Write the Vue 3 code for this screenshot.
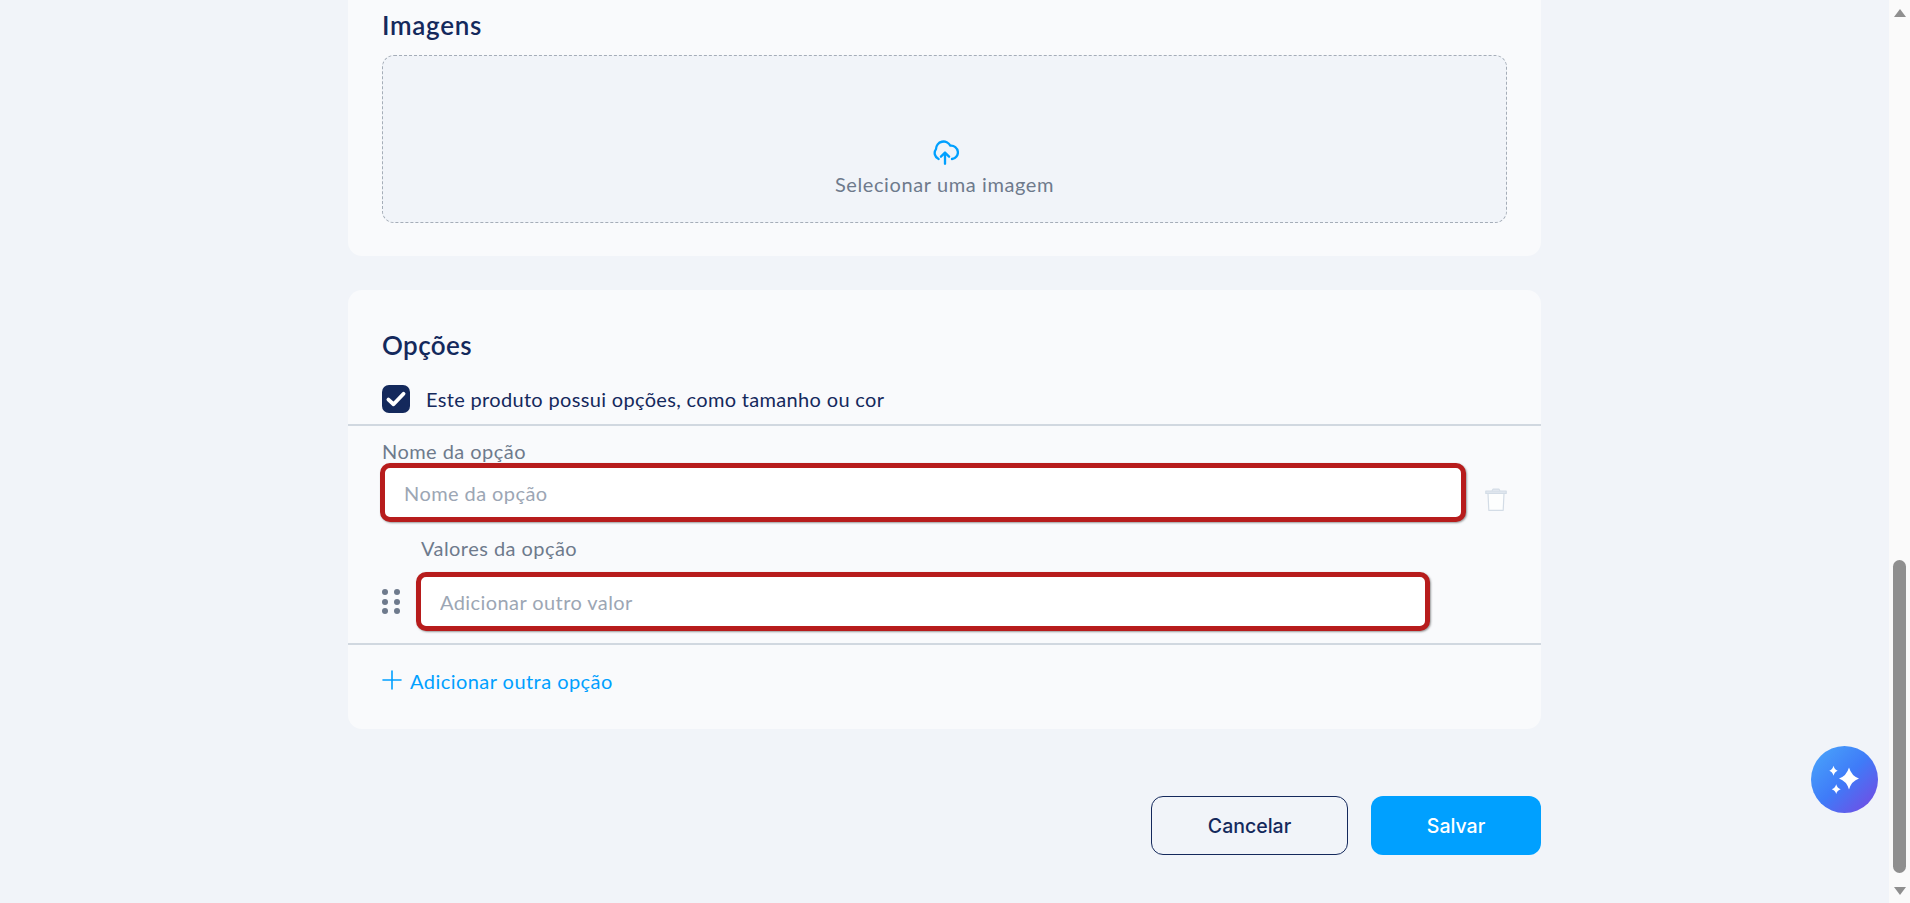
<script setup>
const dots = [1, 2, 3, 4, 5, 6]
</script>

<template>
  <div class="page">
    <main class="content">
      <section class="card card-images">
        <h2 class="title">Imagens</h2>
        <div class="dropzone">
          <svg class="upload" viewBox="0 0 24 24" fill="none" stroke="#00a0ff" stroke-width="2" stroke-linecap="round" stroke-linejoin="round">
            <path d="M6.500 18A5.600 5.600 0 0 1 4.300 9.500 6.500 6.500 0 0 1 16.600 6.600 5.200 5.200 0 0 1 18 18" />
            <path d="M12 22v-9.500M8.500 16l3.500-3.500 3.500 3.500" />
          </svg>
          <span class="drop-text">Selecionar uma imagem</span>
        </div>
      </section>

      <section class="card card-options">
        <h2 class="title">Opções</h2>
        <label class="check-row">
          <span class="checkbox">
            <svg viewBox="0 0 16 16" fill="none" stroke="#fff" stroke-width="2.8" stroke-linecap="round" stroke-linejoin="round">
              <path d="M2.500 8.400l3.700 3.400 7.300-7.600" />
            </svg>
          </span>
          <span class="check-text">Este produto possui opções, como tamanho ou cor</span>
        </label>

        <div class="option-block">
          <div class="option-name">
            <div class="field">
              <span class="label">Nome da opção</span>
              <input class="input" type="text" placeholder="Nome da opção" />
            </div>
            <svg class="trash" viewBox="0 0 22 23" fill="none" stroke="#d3dce6" stroke-width="1.2" stroke-linejoin="round">
              <path d="M3 5.500l.8 16.800h14.400l.8-16.800" fill="#fdfefe" />
              <path d="M.8 3h20.400v2.500H.8z" fill="#dfe6ee" />
              <path d="M7 2.800 8 1.200h6l1 1.600" fill="#dfe6ee" />
            </svg>
          </div>
          <span class="label label-values">Valores da opção</span>
          <div class="value-row">
            <div class="grip">
              <i v-for="d in dots" :key="d"></i>
            </div>
            <input class="input" type="text" placeholder="Adicionar outro valor" />
          </div>
        </div>

        <a class="add-link">
          <svg viewBox="0 0 20 20" fill="none" stroke="#00a0ff" stroke-width="1.6" stroke-linecap="round">
            <path d="M10 1v18M1 10h18" />
          </svg>
          <span>Adicionar outra opção</span>
        </a>
      </section>

      <div class="actions">
        <button class="btn btn-cancel">Cancelar</button>
        <button class="btn btn-save">Salvar</button>
      </div>
    </main>

    <aside class="scrollbar">
      <span class="arrow arrow-up"></span>
      <div class="track"><div class="thumb"></div></div>
      <span class="arrow arrow-down"></span>
    </aside>

    <button class="fab">
      <svg viewBox="0 0 67 67" fill="#fff">
        <path d="M38 21.500Q40.500 30 48 32.500 40.500 35 38 43.500 35.500 35 28 32.500 35.500 30 38 21.500z" />
        <path d="M22.500 19.700Q23.500 23.600 26.700 24.700 23.500 25.800 22.500 29.700 21.500 25.800 18.300 24.700 21.500 23.600 22.500 19.700z" />
        <path d="M25.200 38.300Q26.200 42.100 29.700 43.200 26.200 44.300 25.200 48 24.200 44.300 20.700 43.200 24.200 42.100 25.200 38.300z" />
      </svg>
    </button>
  </div>
</template>

<style>
html, body {
  margin: 0;
  height: 100%;
  overflow: hidden;
  background: #f1f4f9;
}
</style>

<style scoped>
.page {
  display: flex;
  height: 903px;
  overflow: hidden;
  font-family: "Lato", "Liberation Sans", sans-serif;
  color: #14295c;
}

.content {
  flex: 1;
  display: flex;
  flex-direction: column;
  align-items: center;
}

.card {
  width: 1193px;
  box-sizing: border-box;
  background: #f9fafc;
  border-radius: 14px;
}

.card-images {
  height: 256px;
  padding: 10px 34px 0;
  border-radius: 0 0 14px 14px;
  margin-bottom: 34px;
}

.card-options {
  height: 439px;
  padding-top: 40px;
}

.title {
  margin: 0;
  font-size: 26px;
  line-height: 30px;
  font-weight: 600;
  letter-spacing: 0.7px;
  color: #14295c;
}

.card-options .title {
  margin-left: 34px;
  letter-spacing: 0.4px;
}

.dropzone {
  height: 168px;
  margin-top: 15px;
  box-sizing: border-box;
  border: 1px dashed #a5adb8;
  border-radius: 12px;
  background: #f1f4f9;
  display: flex;
  flex-direction: column;
  align-items: center;
  padding-top: 82px;
}

.upload {
  width: 28px;
  height: 28px;
}

.drop-text {
  margin-top: 6px;
  font-size: 20px;
  line-height: 24px;
  letter-spacing: 0.6px;
  color: #6e7a8c;
}

.check-row {
  display: flex;
  align-items: center;
  gap: 16px;
  margin: 25px 0 0 34px;
}

.checkbox {
  width: 28px;
  height: 28px;
  border-radius: 7px;
  background: #14295c;
  display: flex;
  align-items: center;
  justify-content: center;
}

.checkbox svg {
  width: 22px;
  height: 22px;
}

.check-text {
  font-size: 20px;
  line-height: 28px;
  letter-spacing: 0.33px;
}

.option-block {
  margin-top: 11px;
  height: 221px;
  box-sizing: border-box;
  padding: 14px 34px 0;
  border-top: 2px solid #d1d8e0;
  border-bottom: 2px solid #d1d8e0;
  display: flex;
  flex-direction: column;
}

.option-name {
  display: flex;
  align-items: flex-end;
  gap: 19px;
}

.field {
  width: 1086px;
  display: flex;
  flex-direction: column;
  margin-left: -2px;
}

.label {
  font-size: 20px;
  line-height: 23px;
  letter-spacing: 0.45px;
  color: #6e7a8c;
  margin-left: 2px;
}

.input {
  box-sizing: border-box;
  height: 59px;
  padding: 0 19px;
  border: 5px solid #b71c1c;
  border-radius: 10px;
  background: #fff;
  box-shadow: 1px 1px 2px rgba(60, 60, 60, 0.5);
  font-family: inherit;
  font-size: 20px;
  letter-spacing: 0.42px;
  color: #14295c;
  outline: none;
}

.input::placeholder {
  color: #9ca6b4;
  opacity: 1;
}

.trash {
  width: 22px;
  height: 23px;
  margin-bottom: 11px;
}

.label-values {
  margin: 15px 0 0 39px;
}

.value-row {
  display: flex;
  align-items: center;
  gap: 16px;
  margin-top: 12px;
}

.value-row .input {
  width: 1014px;
}

.grip {
  width: 18px;
  display: grid;
  grid-template-columns: 6px 6px;
  gap: 3.500px 5.500px;
}

.grip i {
  width: 6px;
  height: 6px;
  border-radius: 50%;
  background: #6e7a8c;
}

.add-link {
  display: flex;
  align-items: center;
  gap: 8px;
  margin: 24px 0 0 34px;
  font-size: 20px;
  line-height: 24px;
  letter-spacing: 0.45px;
  color: #00a0ff;
}

.add-link svg {
  width: 20px;
  height: 20px;
  margin-top: -3px;
}

.actions {
  width: 1193px;
  display: flex;
  justify-content: flex-end;
  gap: 23px;
  margin-top: 67px;
}

.btn {
  height: 59px;
  border-radius: 12px;
  font-family: "Inter", "Liberation Sans", sans-serif;
  font-size: 19.500px;
  font-weight: 500;
  cursor: pointer;
}

.btn-cancel {
  width: 197px;
  background: transparent;
  border: 1px solid #14295c;
  color: #14295c;
}

.btn-save {
  width: 170px;
  background: #00a0ff;
  border: 0;
  color: #fff;
}

.scrollbar {
  width: 21px;
  height: 903px;
  flex: none;
  background: #fafafa;
  display: flex;
  flex-direction: column;
  align-items: center;
}

.track {
  flex: 1;
  width: 13px;
  padding-top: 560px;
  box-sizing: border-box;
}

.thumb {
  width: 13px;
  height: 313px;
  border-radius: 7px;
  background: #8f8f8f;
}

.arrow {
  flex: none;
  width: 0;
  height: 0;
  border-left: 6px solid transparent;
  border-right: 6px solid transparent;
}

.arrow-up {
  margin-top: 9px;
  border-bottom: 8px solid #8f8f8f;
  margin-bottom: -17px;
}

.arrow-down {
  margin-bottom: 8px;
  border-top: 8px solid #8f8f8f;
}

.fab {
  position: fixed;
  left: 1811px;
  top: 746px;
  width: 67px;
  height: 67px;
  padding: 0;
  border: 0;
  border-radius: 50%;
  background: linear-gradient(135deg, #4aa8fb 0%, #3f7bf8 50%, #7a45e0 100%);
}

.fab svg {
  display: block;
  width: 67px;
  height: 67px;
}
</style>
